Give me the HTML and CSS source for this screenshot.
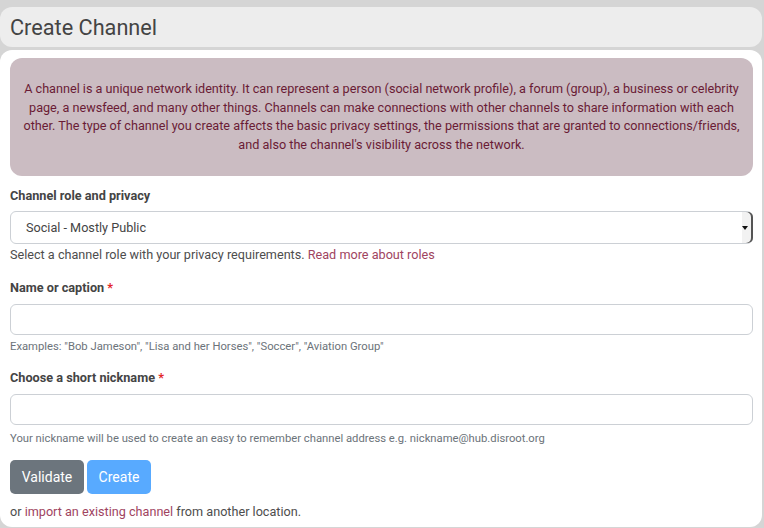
FILE: index.html
```html
<!DOCTYPE html>
<html>
<head>
<meta charset="utf-8">
<link rel="stylesheet" href="styles.css">
</head>
<body>
<div class="page">
  <div class="header"><h2>Create Channel</h2></div>
  <div class="card">
    <div class="alert">A channel is a unique network identity. It can represent a person (social network profile), a forum (group), a business or celebrity page, a newsfeed, and many other things. Channels can make connections with other channels to share information with each other. The type of channel you create affects the basic privacy settings, the permissions that are granted to connections/friends, and also the channel's visibility across the network.</div>

    <div class="group group-first">
      <label class="lbl lbl-first">Channel role and privacy</label>
      <div class="sel-wrap">
        <select class="ctl sel"><option>Social - Mostly Public</option></select>
      </div>
      <div class="help">Select a channel role with your privacy requirements. <a href="#">Read more about roles</a></div>
    </div>

    <div class="group">
      <label class="lbl">Name or caption <span class="req">*</span></label>
      <input class="ctl inp" type="text">
      <div class="small">Examples: "Bob Jameson", "Lisa and her Horses", "Soccer", "Aviation Group"</div>
    </div>

    <div class="group">
      <label class="lbl">Choose a short nickname <span class="req">*</span></label>
      <input class="ctl inp" type="text">
      <div class="small small-last">Your nickname will be used to create an easy to remember channel address e.g. nickname@hub.disroot.org</div>
    </div>

    <div class="buttons">
      <button class="btn btn-gray">Validate</button>
      <button class="btn btn-blue">Create</button>
    </div>

    <div class="foot">or <a href="#">import an existing channel</a> from another location.</div>
  </div>
</div>
</body>
</html>
```

FILE: styles.css
```css
html, body {
  margin: 0;
  padding: 0;
  background: #d5d5d5;
  height: 100%;
  overflow: hidden;
}
body {
  font-family: Roboto, "Liberation Sans", sans-serif;
  font-size: 12.65px;
  color: #4d4d4d;
}
.page {
  width: 762px;
  padding-top: 7px;
}
.header {
  background: #ededed;
  height: 40px;
  border-radius: 12px;
  display: flex;
  align-items: center;
  padding: 0 10px;
}
.header h2 {
  margin: 0;
  font-weight: 400;
  font-size: 21.7px;
  color: #444;
}
.card {
  box-sizing: border-box;
  margin-top: 3px;
  background: #fff;
  border-radius: 12px;
  padding: 8px 9px 0 10px;
  height: 477px;
}
.alert {
  background: #cbbcc2;
  color: #6a1b35;
  border-radius: 12px;
  text-align: center;
  font-size: 12.65px;
  line-height: 18.5px;
  padding: 22px 10px;
  margin-bottom: 10px;
}
.group {
  display: flex;
  flex-direction: column;
  margin-bottom: 13px;
}
.group-first {
  margin-bottom: 14px;
}
.lbl {
  font-weight: 700;
  font-size: 12.7px;
  line-height: 19px;
  color: #444;
  margin-bottom: 7px;
}
.lbl-first {
  margin-bottom: 6px;
}
.req {
  color: #e3262a;
}
.ctl {
  box-sizing: border-box;
  width: 100%;
  border: 1px solid #ccd0d5;
  border-radius: 6px;
  background: #fff;
  font-family: Roboto, "Liberation Sans", sans-serif;
  font-size: 12.65px;
  color: #444;
  margin: 0;
  display: block;
}
.sel-wrap {
  position: relative;
}
.sel {
  -webkit-appearance: none;
  appearance: none;
  height: 33px;
  padding: 0 0 0 15px;
}
.sel-wrap::before {
  content: "";
  position: absolute;
  right: 0;
  top: 1px;
  bottom: 1px;
  width: 11px;
  background: #f2f2f2;
  border-radius: 0 5px 5px 0;
  box-shadow: inset -2px 0 0 #555;
}
.sel-wrap::after {
  content: "";
  position: absolute;
  right: 5px;
  top: 15px;
  border-left: 3px solid transparent;
  border-right: 3px solid transparent;
  border-top: 4px solid #111;
}
.inp {
  height: 31px;
  padding: 0 12px;
}
.help {
  line-height: 19px;
  margin-top: 1px;
  color: #4d4d4d;
}
.small {
  font-size: 11.25px;
  line-height: 16px;
  margin-top: 4px;
  color: #6c737a;
}
.small-last {
  margin-top: 6px;
}
a {
  color: #a0445f;
  text-decoration: none;
}
.buttons {
  display: flex;
  gap: 3px;
  margin-top: 0;
}
.btn {
  border: none;
  border-radius: 5px;
  height: 34px;
  color: #fff;
  font-family: Roboto, "Liberation Sans", sans-serif;
  font-size: 14px;
  padding: 0;
}
.btn-gray {
  background: #6c757d;
  width: 74px;
}
.btn-blue {
  background: #58aaff;
  width: 64px;
}
.foot {
  margin-top: 8px;
  line-height: 19px;
}
```
